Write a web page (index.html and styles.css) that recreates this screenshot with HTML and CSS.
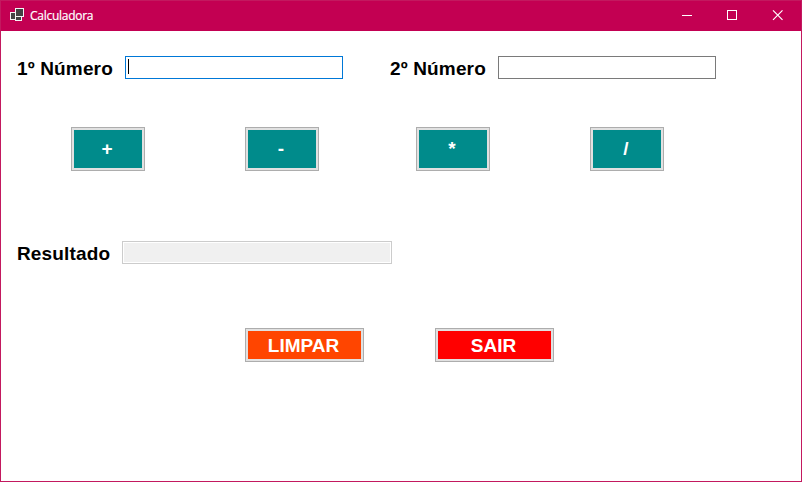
FILE: index.html
```html
<!DOCTYPE html>
<html lang="pt-BR">
<head>
<meta charset="utf-8">
<title>Calculadora</title>
<link rel="stylesheet" href="styles.css">
</head>
<body>
<div class="window">
  <header class="titlebar">
    <svg class="app-icon" width="16" height="16" viewBox="0 0 16 16" shape-rendering="crispEdges">
      <g fill="#424242" stroke="#f4f4f4">
        <rect x="1.5" y="4.5" width="6" height="7"/>
        <rect x="6.5" y="0.5" width="8" height="8"/>
        <rect x="6.5" y="8.5" width="6" height="4"/>
      </g>
    </svg>
    <span class="title">Calculadora</span>
    <div class="controls">
      <svg width="45" height="30" viewBox="0 0 45 30"><path d="M17 14.5h10" stroke="#fff"/></svg>
      <svg width="45" height="30" viewBox="0 0 45 30"><rect x="17.5" y="9.5" width="9" height="9" fill="none" stroke="#fff"/></svg>
      <svg width="45" height="30" viewBox="0 0 45 30"><path d="M18 9.3l9.5 9.5M27.5 9.3L18 18.8" stroke="#fff" stroke-width="1.2"/></svg>
    </div>
  </header>
  <main class="form">
    <div class="row inputs">
      <label class="label number">1º Número</label>
      <div class="field focused"><span class="caret"></span></div>
      <label class="label number second">2º Número</label>
      <div class="field"></div>
    </div>
    <div class="row operators">
      <button class="btn op">+</button>
      <button class="btn op">-</button>
      <button class="btn op">*</button>
      <button class="btn op">/</button>
    </div>
    <div class="row result">
      <label class="label total">Resultado</label>
      <div class="field readonly"></div>
    </div>
    <div class="row actions">
      <button class="btn clear">LIMPAR</button>
      <button class="btn exit">SAIR</button>
    </div>
  </main>
</div>
</body>
</html>
```
FILE: styles.css
```css
* { box-sizing: border-box; }
body { margin: 0; background: #fff; }
.window {
  width: 802px;
  height: 482px;
  border: 1px solid #c3195f;
  background: #fff;
  overflow: hidden;
}
.titlebar {
  height: 30px;
  display: flex;
  align-items: center;
  background: #c30052;
  color: #fff;
  padding-left: 8px;
  font: 12px/16px "Open Sans", "Noto Sans", sans-serif;
}
.app-icon { margin-right: 5px; }
.title { letter-spacing: -0.27px; -webkit-text-stroke: 0.2px #fff; }
.controls { display: flex; margin-left: auto; margin-right: 1px; }
.form {
  padding-left: 16px;
  font: bold 19px/23px "Liberation Sans", Arial, sans-serif;
  color: #000;
}
.row { display: flex; }
.label { white-space: nowrap; padding-top: 1px; height: 23px; letter-spacing: 0.15px; }
.number { width: 108px; }
.total { width: 105px; }
.second { margin-left: 47px; }
.field {
  width: 218px;
  height: 23px;
  border: 1px solid #7a7a7a;
  background: #fff;
}
.focused { border-color: #0078d7; padding: 2px; }
.caret { display: block; width: 1px; height: 15px; background: #000; }
.readonly {
  width: 270px;
  border-color: #ccc;
  background: #f0f0f0;
  box-shadow: inset 0 0 0 1px #fff;
}
.inputs { padding-top: 25px; }
.operators {
  margin: 48px 0 0 54px;
  display: grid;
  grid-template-columns: 174px 171px 174px 74px;
}
.result { margin-top: 70px; }
.actions { margin: 64px 0 0 228px; gap: 71px; }
.btn {
  padding: 0 2px 0 0;
  border: 1px solid #adadad;
  box-shadow: inset 0 0 0 2px #e1e1e1;
  color: #fff;
  font: inherit;
}
.op { width: 74px; height: 44px; padding-bottom: 1px; background: #008b8b; }
.clear, .exit { width: 119px; height: 34px; }
.clear { background: #ff4500; }
.exit { background: #f00; }
```
